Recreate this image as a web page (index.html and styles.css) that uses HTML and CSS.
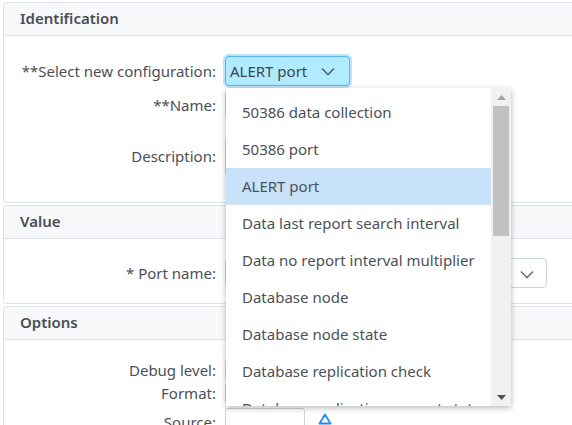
FILE: index.html
```html
<!DOCTYPE html>
<html>
<head>
<meta charset="utf-8">
<link rel="stylesheet" href="styles.css">
</head>
<body>
<div class="page">
  <div class="panel">
    <div class="panel-head">Identification</div>
    <div class="panel-body id-body">
      <div class="row">
        <label class="lbl">**Select new configuration:</label>
        <div class="select focused">ALERT port
          <svg class="chev" width="14" height="9" viewBox="0 0 14 9"><path d="M1 1.5 L7 7.5 L13 1.5" fill="none" stroke="#5a6470" stroke-width="1.6"/></svg>
        </div>
      </div>
      <div class="row name-row">
        <label class="lbl">**Name:</label>
        <div class="input wide"></div>
      </div>
      <div class="row desc-row">
        <label class="lbl">Description:</label>
        <div class="input wide tall"></div>
      </div>
    </div>
  </div>

  <div class="panel">
    <div class="panel-head">Value</div>
    <div class="panel-body val-body">
      <div class="row">
        <label class="lbl">* Port name:</label>
        <div class="select plain">
          <svg class="chev" width="14" height="9" viewBox="0 0 14 9"><path d="M1 1.5 L7 7.5 L13 1.5" fill="none" stroke="#6c7680" stroke-width="1.6"/></svg>
        </div>
      </div>
    </div>
  </div>

  <div class="panel">
    <div class="panel-head">Options</div>
    <div class="panel-body opt-body">
      <div class="row small-row">
        <label class="lbl">Debug level:</label>
        <div class="input short"></div>
      </div>
      <div class="row small-row fmt-row">
        <label class="lbl">Format:</label>
        <div class="input short"></div>
      </div>
      <div class="row src-row">
        <label class="lbl">Source:</label>
        <div class="input src"></div>
        <svg class="tri" width="14" height="12" viewBox="0 0 14 12"><path d="M7 1.5 L12.5 10.5 L1.5 10.5 Z" fill="none" stroke="#1a8cff" stroke-width="1.8" stroke-linejoin="round"/></svg>
      </div>
    </div>
  </div>

  <div class="dropdown">
    <ul class="items">
      <li>50386 data collection</li>
      <li>50386 port</li>
      <li class="sel">ALERT port</li>
      <li>Data last report search interval</li>
      <li>Data no report interval multiplier</li>
      <li>Database node</li>
      <li>Database node state</li>
      <li>Database replication check</li>
      <li>Database replication current state</li>
    </ul>
    <div class="sbar">
      <svg class="arr" width="9" height="5" viewBox="0 0 9 5"><path d="M0 5 L4.5 0 L9 5 Z" fill="#a3a3a3"/></svg>
      <div class="thumb"></div>
      <div class="track"></div>
      <svg class="arr" width="9" height="5" viewBox="0 0 9 5"><path d="M0 0 L4.5 5 L9 0 Z" fill="#505050"/></svg>
    </div>
  </div>
</div>
</body>
</html>
```

FILE: styles.css
```css
html, body {
  margin: 0;
  padding: 0;
  background: #ffffff;
  overflow: hidden;
}
body {
  width: 572px;
  height: 425px;
  font-family: "Noto Sans", "Open Sans", sans-serif;
  font-size: 15px;
  color: #495057;
}
.page {
  position: relative;
  padding: 2px 0 0 3px;
  width: 700px;
}
.panel {
  border: 1px solid #dfe2e6;
  border-radius: 3px;
  margin-bottom: 2px;
  background: #fff;
}
.panel-head {
  height: 32px;
  line-height: 31px;
  background: #f7f8fa;
  border-bottom: 1px solid #dfe2e6;
  padding-left: 16px;
  font-weight: 600;
  color: #4a4f55;
}
.panel-body {
  display: flex;
  flex-direction: column;
}
.id-body { padding: 20px 0 0 0; height: 146px; }
.val-body { padding: 19px 0 0 0; height: 45px; }
.opt-body { padding: 19px 0 0 0; height: 71px; }
.row {
  display: flex;
  align-items: center;
  gap: 9px;
}
.lbl {
  width: 212px;
  text-align: right;
  flex: none;
}
.select {
  height: 30px;
  box-sizing: border-box;
  border-radius: 4px;
  display: flex;
  align-items: center;
  padding-left: 4px;
  position: relative;
}
.select.focused {
  width: 125px;
  background: #b0ebff;
  border: 1px solid #59b4f0;
  box-shadow: 0 0 0 2px #bfe2fb;
  color: #3f464d;
}
.select.focused .chev { position: absolute; left: 95px; top: 10px; }
.select.plain {
  width: 322px;
  border: 1px solid #ced4da;
}
.select.plain .chev { position: absolute; right: 12px; top: 11px; }
.name-row { margin-top: 5px; }
.desc-row { margin-top: 17px; }
.input {
  height: 28px;
  box-sizing: border-box;
  border: 1px solid #ced4da;
  border-radius: 3px;
}
.input.wide { width: 250px; }
.input.tall { height: 40px; }
.small-row { height: 24px; }
.fmt-row { margin-top: 1px; }
.input.short { width: 80px; height: 22px; }
.src-row { margin-top: 4px; }
.input.src { width: 80px; height: 28px; }
.tri { margin-left: 4px; margin-top: -6px; }

.dropdown {
  position: absolute;
  left: 226px;
  top: 88px;
  width: 285px;
  height: 318px;
  background: #fff;
  box-shadow: 0 2px 6px rgba(0,0,0,0.28);
  display: flex;
  overflow: hidden;
}
.items {
  list-style: none;
  margin: 0;
  padding: 6px 0 0 0;
  flex: 1;
}
.items li {
  height: 37px;
  line-height: 37px;
  padding-left: 16px;
  white-space: nowrap;
  color: #4b5157;
}
.items li.sel { background: #c8e3f9; }
.sbar {
  width: 20px;
  background: #f1f1f1;
  display: flex;
  flex-direction: column;
  align-items: center;
}
.arr { margin: 6px 0 6px; flex: none; }
.sbar .arr:first-child { margin-top: 7px; }
.thumb {
  width: 16px;
  height: 130px;
  background: #c1c1c1;
  flex: none;
}
.track { flex: 1; }
```
